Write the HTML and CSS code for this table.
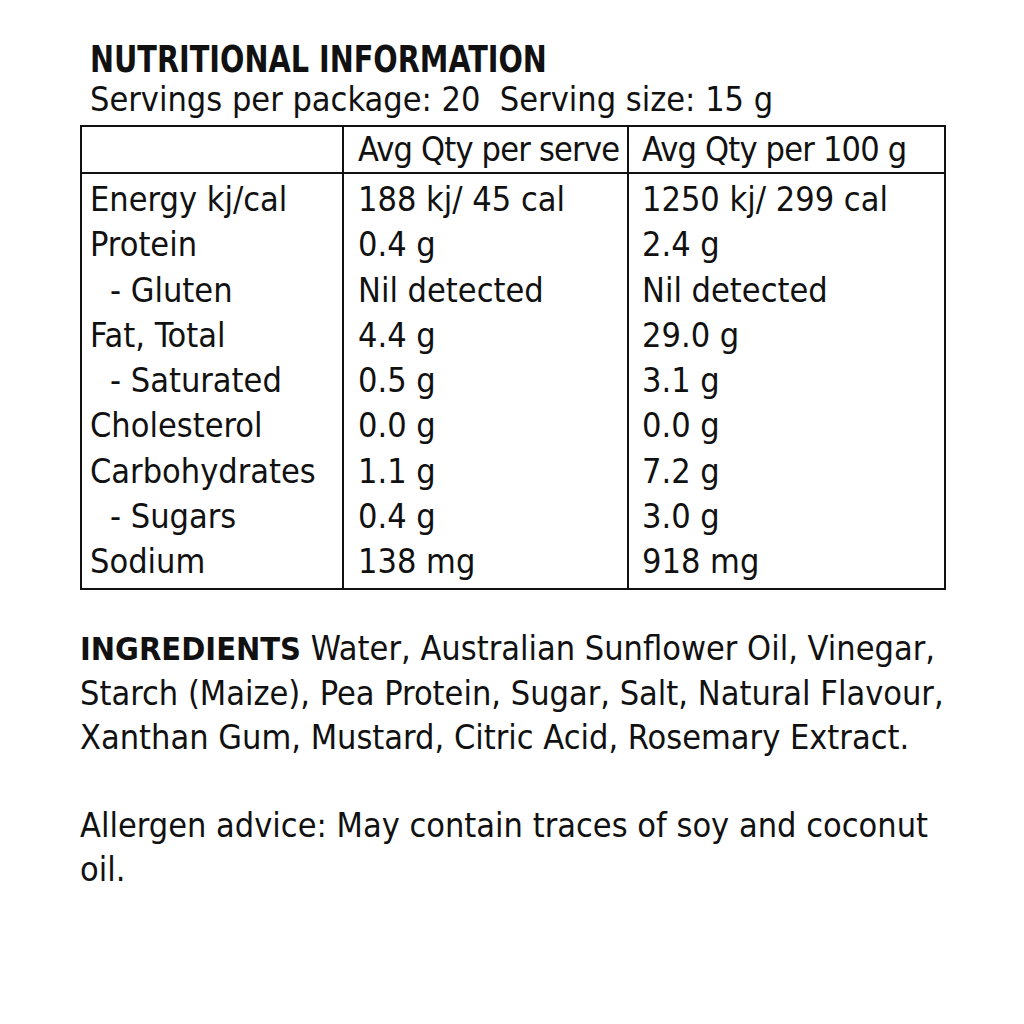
FILE: index.html
```html
<!DOCTYPE html>
<html lang="en">
<head>
<meta charset="utf-8">
<title>Nutritional Information</title>
<link rel="stylesheet" href="styles.css">
</head>
<body>
<main class="label">
  <header class="heading">
    <h1 class="title">NUTRITIONAL INFORMATION</h1>
    <p class="servings">Servings per package: 20&nbsp; Serving size: 15 g</p>
  </header>
  <div class="nip">
    <div class="cell head first"></div>
    <div class="cell head">Avg Qty per serve</div>
    <div class="cell head">Avg Qty per 100 g</div>

    <div class="cell first top">Energy kj/cal</div>
    <div class="cell top">188 kj/ 45 cal</div>
    <div class="cell top">1250 kj/ 299 cal</div>

    <div class="cell first">Protein</div>
    <div class="cell">0.4 g</div>
    <div class="cell">2.4 g</div>

    <div class="cell first sub">- Gluten</div>
    <div class="cell">Nil detected</div>
    <div class="cell">Nil detected</div>

    <div class="cell first">Fat, Total</div>
    <div class="cell">4.4 g</div>
    <div class="cell">29.0 g</div>

    <div class="cell first sub">- Saturated</div>
    <div class="cell">0.5 g</div>
    <div class="cell">3.1 g</div>

    <div class="cell first">Cholesterol</div>
    <div class="cell">0.0 g</div>
    <div class="cell">0.0 g</div>

    <div class="cell first">Carbohydrates</div>
    <div class="cell">1.1 g</div>
    <div class="cell">7.2 g</div>

    <div class="cell first sub">- Sugars</div>
    <div class="cell">0.4 g</div>
    <div class="cell">3.0 g</div>

    <div class="cell first bottom">Sodium</div>
    <div class="cell bottom">138 mg</div>
    <div class="cell bottom">918 mg</div>
  </div>
  <p class="ingredients"><strong>INGREDIENTS</strong> Water, Australian Sunflower Oil, Vinegar, Starch (Maize), Pea Protein, Sugar, Salt, Natural Flavour, Xanthan Gum, Mustard, Citric Acid, Rosemary Extract.</p>
  <p class="allergen">Allergen advice: May contain traces of soy and coconut oil.</p>
</main>
</body>
</html>
```

FILE: styles.css
```css
html, body {
  margin: 0;
  padding: 0;
  background: #ffffff;
}

body {
  font-family: "Liberation Sans Narrow", "Arial Narrow", "DejaVu Sans Condensed", "Liberation Sans", sans-serif;
  font-stretch: condensed;
  color: #111111;
}

.label {
  width: 866px;
  margin-left: 80px;
  padding-top: 39px;
}

.heading {
  padding-left: 10px;
}

.title {
  margin: 0;
  font-size: 38px;
  line-height: 40px;
  font-weight: bold;
  white-space: nowrap;
  transform: scaleX(0.84);
  transform-origin: left center;
}

.servings {
  margin: 0;
  font-size: 34px;
  line-height: 40px;
}

.nip {
  margin-top: 6px;
  border: 2px solid #111111;
  display: grid;
  grid-template-columns: 260px 285px 317px;
  font-size: 34px;
  line-height: 45.3px;
}

.cell {
  padding-left: 13px;
  border-left: 2px solid #111111;
  white-space: nowrap;
}

.cell.first {
  padding-left: 8px;
  border-left: none;
}

.cell:nth-child(3n+2) {
  padding-left: 14px;
}

.cell.sub {
  padding-left: 28px;
}

.cell.head {
  line-height: 45px;
  letter-spacing: -0.8px;
  border-bottom: 2px solid #111111;
}

.cell.top {
  padding-top: 3px;
}

.cell.bottom {
  padding-bottom: 3px;
}

.ingredients,
.allergen {
  margin: 0;
  width: 880px;
  font-size: 34px;
  line-height: 44px;
}

.ingredients {
  margin-top: 36px;
}

.ingredients strong {
  font-weight: bold;
  font-size: 32.3px;
}

.allergen {
  margin-top: 44px;
}
```
